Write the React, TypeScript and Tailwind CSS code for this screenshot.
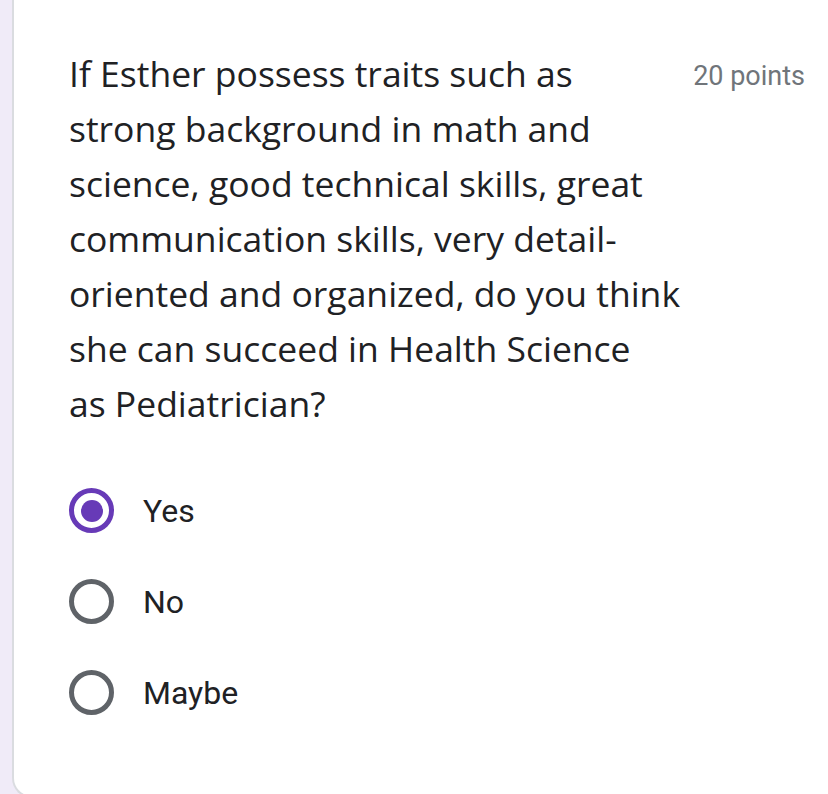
import React from 'react';

const lines = [
  'If Esther possess traits such as',
  'strong background in math and',
  'science, good technical skills, great',
  'communication skills, very detail-',
  'oriented and organized, do you think',
  'she can succeed in Health Science',
  'as Pediatrician?',
];

const options = [
  { label: 'Yes', checked: true },
  { label: 'No', checked: false },
  { label: 'Maybe', checked: false },
];

function Radio({ checked }: { checked: boolean }) {
  if (checked) {
    return (
      <div className="w-[45px] h-[45px] rounded-full border-[5px] border-[#673ab7] flex items-center justify-center flex-shrink-0">
        <div className="w-[22px] h-[22px] rounded-full bg-[#673ab7]" />
      </div>
    );
  }
  return <div className="w-[45px] h-[45px] rounded-full border-[5px] border-[#5f6368] flex-shrink-0" />;
}

export default function App() {
  return (
    <div className="w-[828px] h-[794px] bg-[#f0ebf8] overflow-hidden">
      <div className="ml-[12px] h-[798px] bg-white border-l-2 border-b-2 border-[#dadce0] rounded-bl-[20px] pl-[55px] pr-[23px] pt-[46px]">
        <div className="flex justify-between items-start">
          <div
            className="text-[35.5px] leading-[55px] text-[#202124]"
            style={{ fontFamily: '"Open Sans", sans-serif' }}
          >
            {lines.map((l) => (
              <div key={l} className="whitespace-nowrap">{l}</div>
            ))}
          </div>
          <div
            className="text-[27px] leading-[60px] text-[#70757a] whitespace-nowrap"
            style={{ fontFamily: 'Roboto, sans-serif' }}
          >
            20 points
          </div>
        </div>
        <div className="mt-[34px] flex flex-col">
          {options.map((o) => (
            <div key={o.label} className="h-[91px] flex items-center gap-[29px]">
              <Radio checked={o.checked} />
              <span
                className="text-[32px] text-[#202124]"
                style={{ fontFamily: 'Roboto, sans-serif' }}
              >
                {o.label}
              </span>
            </div>
          ))}
        </div>
      </div>
    </div>
  );
}
